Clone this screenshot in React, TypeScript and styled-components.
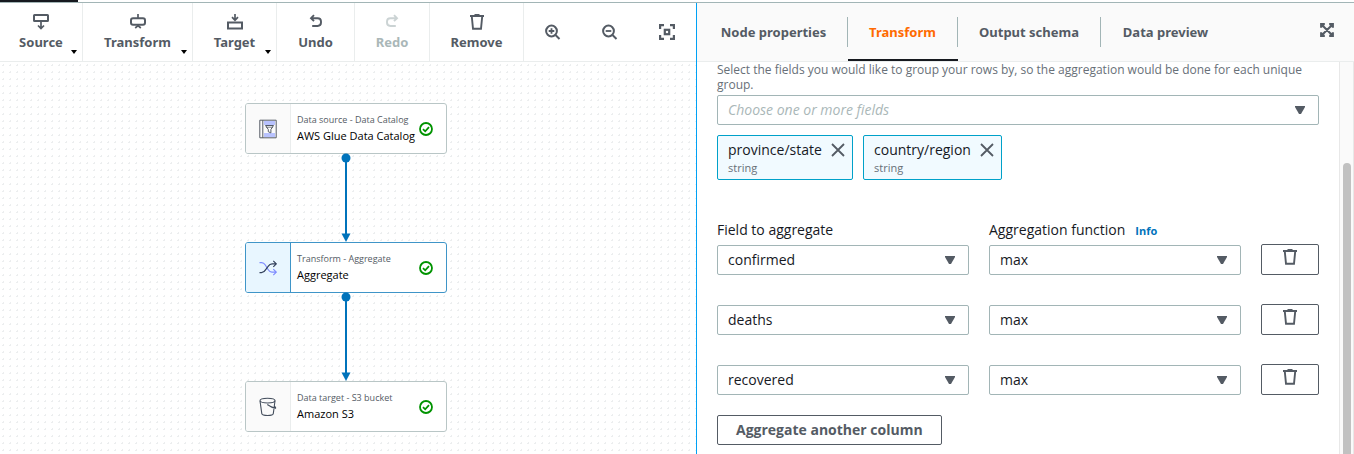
import React from 'react';
import styled, { createGlobalStyle, css } from 'styled-components';

const colors = {
  ink: '#16191f',
  slate: '#545b64',
  muted: '#687078',
  disabled: '#aab7b8',
  border: '#a2b5b6',
  line: '#eaeded',
  link: '#0073bb',
  orange: '#ff6a00',
  green: '#009300',
};

const GlobalStyle = createGlobalStyle`
  *, *::before, *::after { box-sizing: border-box; }
  body {
    margin: 0;
    background: #fff;
    color: ${colors.ink};
    font-family: 'Open Sans', 'Noto Sans', sans-serif;
    font-size: 14px;
    line-height: 20px;
  }
  button, select { font: inherit; color: inherit; margin: 0; }
  svg { display: block; }
`;

const Page = styled.div`
  display: flex;
  flex-direction: column;
  height: 100vh;
  overflow: hidden;
`;

const TopStrip = styled.header`
  flex: none;
  height: 3px;
  border-bottom: 1px solid ${colors.border};
`;

const ActivePage = styled.div`
  width: 78px;
  height: 2px;
  background: #16191f;
`;

const Workspace = styled.main`
  flex: 1;
  min-height: 0;
  display: grid;
  grid-template-columns: minmax(0, 696fr) minmax(0, 658fr);
`;

const GraphPane = styled.section`
  display: flex;
  flex-direction: column;
  min-width: 0;
  min-height: 0;
`;

const Toolbar = styled.div`
  flex: none;
  display: flex;
  height: 59px;
  border-bottom: 1px solid ${colors.line};
`;

const ToolButton = styled.button<{ $width: number }>`
  position: relative;
  flex: none;
  display: flex;
  flex-direction: column;
  align-items: center;
  width: ${(p) => p.$width}px;
  padding: 11px 0 0;
  border: 0;
  border-right: 1px solid ${colors.line};
  background: none;
  color: ${colors.slate};
  font-family: 'Noto Sans', sans-serif;
  font-size: 13px;
  font-weight: 700;
  gap: 2px;
  &:disabled { color: ${colors.disabled}; }
  &:disabled svg { opacity: 0.6; }
`;

const MenuCaret = styled.span`
  position: absolute;
  right: 5px;
  bottom: 7px;
  border: 3px solid transparent;
  border-top: 4px solid #000;
  border-bottom: 0;
`;

const IconButton = styled.button`
  flex: none;
  display: grid;
  place-items: center;
  width: 57px;
  padding: 0;
  border: 0;
  background: none;
  color: ${colors.slate};
`;

const Canvas = styled.div`
  position: relative;
  flex: 1;
  min-height: 0;
  overflow: hidden;
  background-image: radial-gradient(circle, #eceeef 1px, transparent 1px);
  background-size: 7px 7px;
`;

const Edges = styled.svg`
  position: absolute;
  top: 0;
  left: 0;
`;

const NodeCard = styled.article<{ $top: number; $selected?: boolean }>`
  position: absolute;
  left: 245px;
  top: ${(p) => p.$top}px;
  display: flex;
  align-items: center;
  width: 202px;
  height: 51px;
  border: 1px solid ${(p) => (p.$selected ? '#3f95c8' : '#b9c6c6')};
  border-radius: 3px;
  background: #fff;
  overflow: hidden;
`;

const NodeIcon = styled.div<{ $selected?: boolean }>`
  align-self: stretch;
  display: grid;
  place-items: center;
  width: 45px;
  border-right: 1px solid ${colors.line};
  background: #fafafa;
  ${(p) =>
    p.$selected &&
    css`
      border-color: #3f95c8;
      background: #e8f6ff;
    `}
`;

const NodeText = styled.div`
  flex: 1;
  padding: 0 0 2px 6px;
  line-height: 16px;
  white-space: nowrap;
`;

const NodeKind = styled.div`
  color: ${colors.slate};
  font-size: 9px;
`;

const NodeName = styled.div`
  color: #000;
  font-size: 11px;
  font-weight: 500;
`;

const NodeStatus = styled.div`
  padding-right: 13px;
`;

const DetailPane = styled.section`
  display: flex;
  flex-direction: column;
  min-width: 0;
  min-height: 0;
  border-left: 1px solid #00a1f5;
`;

const TabBar = styled.div`
  flex: none;
  display: flex;
  align-items: center;
  height: 59px;
  padding: 0 20px 0 3px;
  border-bottom: 1px solid ${colors.line};
  background: #fafafa;
`;

const TabList = styled.div`
  flex: 1;
  display: flex;
  align-self: stretch;
`;

const Tab = styled.button<{ $width: number; $active?: boolean }>`
  display: flex;
  align-items: center;
  width: ${(p) => p.$width}px;
  padding: 0;
  border: 0;
  background: none;
  color: ${(p) => (p.$active ? colors.orange : colors.slate)};
  font-family: 'Noto Sans', sans-serif;
  font-size: 13px;
  font-weight: 700;
  white-space: nowrap;
  box-shadow: ${(p) => (p.$active ? 'inset 0 -2px 0 #16191f' : 'none')};
`;

const TabLabel = styled.span`
  flex: 1;
  line-height: 30px;
  text-align: center;
  border-right: 1px solid ${colors.border};
  ${Tab}:last-child & { border-right: 0; }
`;

const ExpandButton = styled.button`
  padding: 0 0 4px;
  border: 0;
  background: none;
  color: ${colors.slate};
`;

const PaneBody = styled.div`
  flex: 1;
  min-height: 0;
  display: flex;
  overflow: hidden;
`;

const Form = styled.form`
  flex: 1;
  min-width: 0;
  padding: 0 20px;
`;

const Hint = styled.p`
  margin: 0 0 3px;
  color: ${colors.muted};
  font-size: 12px;
  line-height: 15px;
`;

const SelectBox = styled.div`
  display: grid;
  align-items: center;
  & > * { grid-area: 1 / 1; }
  & > svg { justify-self: end; margin-right: 13px; pointer-events: none; }
`;

const Select = styled.select<{ $placeholder?: boolean }>`
  appearance: none;
  width: 100%;
  height: 30px;
  padding: 0 30px 0 10px;
  border: 1px solid ${colors.border};
  border-radius: 2px;
  background: #fff;
  color: ${(p) => (p.$placeholder ? colors.disabled : colors.ink)};
  font-style: ${(p) => (p.$placeholder ? 'italic' : 'normal')};
`;

const Tags = styled.div`
  display: flex;
  gap: 10px;
  margin: 10px 0 40px;
`;

const Tag = styled.div<{ $width: number }>`
  display: flex;
  justify-content: space-between;
  align-items: flex-start;
  width: ${(p) => p.$width}px;
  height: 45px;
  padding: 4px 7px 0 10px;
  border: 1px solid #00a1c9;
  border-radius: 2px;
  background: #f1faff;
`;

const TagType = styled.div`
  color: ${colors.muted};
  font-size: 11px;
  line-height: 16px;
`;

const TagRemove = styled.button`
  margin-top: 3px;
  padding: 0;
  border: 0;
  background: none;
  color: ${colors.slate};
`;

const Row = styled.div`
  display: grid;
  grid-template-columns: minmax(0, 1fr) minmax(0, 1fr) 58px;
  gap: 20px;
  align-items: end;
  margin-bottom: 29px;
  &:last-of-type { margin-bottom: 20px; }
`;

const HeadRow = styled(Row)`
  align-items: baseline;
  height: 20px;
  margin-bottom: 4px;
`;

const InfoLink = styled.a`
  margin-left: 10px;
  color: ${colors.link};
  font-size: 11px;
  font-weight: 700;
  text-decoration: none;
`;

const OutlineButton = styled.button`
  display: inline-flex;
  justify-content: center;
  height: 30px;
  padding: 4px 18px;
  border: 1px solid ${colors.slate};
  border-radius: 2px;
  background: #fff;
  color: ${colors.slate};
  font-weight: 700;
`;

const DeleteButton = styled(OutlineButton)`
  height: 31px;
  padding: 4px 0;
`;

const ScrollTrack = styled.div`
  flex: none;
  width: 15px;
  padding: 101px 2px 0 3px;
  border: solid #e8e8e8;
  border-width: 0 1px;
  background: #fafafa;
`;

const ScrollThumb = styled.div`
  height: 100%;
  border-radius: 4px 4px 0 0;
  background: #c1c1c1;
`;

const Glyph = ({ size = 16, children }: { size?: number; children: React.ReactNode }) => (
  <svg width={size} height={size} viewBox="0 0 16 16" fill="none" stroke="currentColor" strokeWidth="2" aria-hidden="true">
    {children}
  </svg>
);

const SourceIcon = () => (
  <Glyph><rect x="1" y="1" width="14" height="6" rx="0.5" /><path d="M8 7v7M5 11.5l3 3 3-3" strokeWidth="1.7" /></Glyph>
);
const TransformIcon = () => (
  <Glyph><rect x="1" y="4.3" width="14" height="6.4" rx="2" /><path d="M8 0v4M8 11v2M5.2 14l2.8-2.4 2.8 2.4" strokeWidth="1.7" /></Glyph>
);
const TargetIcon = () => (
  <Glyph><rect x="1" y="8.5" width="14" height="6" /><path d="M8 0v6M5 3.2l3 3 3-3" strokeWidth="1.7" /></Glyph>
);
const UndoPath = () => <path d="M6 1.2L3 4.2l3 3M3 4.2h6.6q3.4 0 3.4 3.4v1q0 3.4-3.4 3.4H4.2" strokeWidth="1.9" />;
const UndoIcon = () => <Glyph><UndoPath /></Glyph>;
const RedoIcon = () => <Glyph><g transform="translate(16 0) scale(-1 1)"><UndoPath /></g></Glyph>;
const TrashIcon = () => (
  <Glyph><path d="M1 2h14M5.5 1h5" strokeWidth="1.8" /><path d="M2.8 2.5l1.2 12.3h8l1.2-12.3" strokeWidth="1.9" /></Glyph>
);
const ZoomIcon = ({ plus }: { plus?: boolean }) => (
  <Glyph><circle cx="6.5" cy="7" r="5.4" /><path d="M10.5 11l4 4" /><path d={plus ? 'M3.7 7h5.6M6.5 4.2v5.6' : 'M3.7 7h5.6'} strokeWidth="1.8" /></Glyph>
);
const FitIcon = () => (
  <Glyph><path d="M1 5V1h4M11 1h4v4M15 11v4h-4M5 15H1v-4" strokeWidth="2.4" /><rect x="5.8" y="5.8" width="4.4" height="4.4" strokeWidth="2.2" /></Glyph>
);
const ExpandIcon = () => (
  <Glyph size={14}><path d="M1.3 5.5V1.3h4.2M10.5 1.3h4.2v4.2M14.7 10.5v4.2h-4.2M5.5 14.7H1.3v-4.2M2 2l12 12M14 2L2 14" strokeWidth="2.4" /></Glyph>
);
const CloseIcon = () => (
  <svg width="14" height="14" viewBox="0 0 14 14" stroke="currentColor" strokeWidth="1.8" aria-hidden="true"><path d="M1 1l12 12M13 1L1 13" /></svg>
);
const Arrow = () => (
  <svg width="12" height="8" viewBox="0 0 12 8" fill={colors.slate} aria-hidden="true"><path d="M1 0h10v1L7 8H5L1 1z" /></svg>
);
const CheckIcon = () => (
  <svg width="14" height="14" viewBox="0 0 14 14" fill="none" stroke={colors.green} strokeWidth="1.8" role="img" aria-label="Valid">
    <circle cx="7" cy="7" r="6" /><path d="M4 7.2l2.2 2.1L10 5.2" />
  </svg>
);

const CatalogIcon = () => (
  <svg width="18" height="20" viewBox="0 0 18 20" fill="none" stroke="#545b64" aria-hidden="true">
    <path d="M5 3h11M5 5h11M5 15h11M5 17h11" stroke="#a3b0ff" strokeWidth="1.4" />
    <path d="M.8 1.2h16.4v17.6H.8zM3.8 1.2v17.6" />
    <path d="M6.5 6.5h8l-2.6 4v3.4l-2.6-1.2v-2.2z" fill="#fff" />
    <path d="M7 8.2h7" strokeWidth=".8" />
  </svg>
);
const ShuffleIcon = () => (
  <svg width="18" height="16" viewBox="0 0 18 16" fill="none" strokeWidth="1.2" aria-hidden="true">
    <path d="M.5 2.6h2.2c1.6 0 2.6.8 3.6 2.4l2.6 4.2c1.2 2 2.2 3 4 3h4M14.3 9.2l3 3-3 3" stroke="#7f8cff" />
    <path d="M.5 12.6h2c2 0 3-1 4.2-3l2.4-3.2c1.2-1.9 2.3-2.6 4-2.6h4M14.3.8l3 3-3 3" stroke="#33415c" />
  </svg>
);
const BucketIcon = () => (
  <svg width="18" height="20" viewBox="0 0 18 20" fill="none" stroke="#454f5e" strokeWidth="1.1" aria-hidden="true">
    <ellipse cx="8.5" cy="3.6" rx="7.5" ry="2.4" />
    <path d="M1 3.8l1.8 12.8c.6 2.5 11 2.5 11.5 0L16 3.8M8.3 7.5c3 2.2 5.6 3.3 8.2 3.8.6-.6-.2-1.5-1.5-2.3" />
  </svg>
);

const tools = [
  { label: 'Source', icon: <SourceIcon />, width: 83, menu: true },
  { label: 'Transform', icon: <TransformIcon />, width: 110, menu: true },
  { label: 'Target', icon: <TargetIcon />, width: 84, menu: true },
  { label: 'Undo', icon: <UndoIcon />, width: 78 },
  { label: 'Redo', icon: <RedoIcon />, width: 75, disabled: true },
  { label: 'Remove', icon: <TrashIcon />, width: 94 },
];

const nodes = [
  { kind: 'Data source - Data Catalog', name: 'AWS Glue Data Catalog', icon: <CatalogIcon />, top: 41 },
  { kind: 'Transform - Aggregate', name: 'Aggregate', icon: <ShuffleIcon />, top: 180, selected: true },
  { kind: 'Data target - S3 bucket', name: 'Amazon S3', icon: <BucketIcon />, top: 319 },
];

const tabs = [
  { label: 'Node properties', width: 148 },
  { label: 'Transform', width: 110, active: true },
  { label: 'Output schema', width: 143 },
  { label: 'Data preview', width: 129 },
];

const tags = [
  { name: 'province/state', width: 136 },
  { name: 'country/region', width: 139 },
];

const fields = ['confirmed', 'deaths', 'recovered'];

export default function App() {
  return (
    <Page>
      <GlobalStyle />
      <TopStrip><ActivePage /></TopStrip>
      <Workspace>
        <GraphPane>
          <Toolbar>
            {tools.map((t) => (
              <ToolButton key={t.label} type="button" $width={t.width} disabled={t.disabled}>
                {t.icon}
                <span>{t.label}</span>
                {t.menu && <MenuCaret />}
              </ToolButton>
            ))}
            <IconButton type="button" aria-label="Zoom in"><ZoomIcon plus /></IconButton>
            <IconButton type="button" aria-label="Zoom out"><ZoomIcon /></IconButton>
            <IconButton type="button" aria-label="Fit to screen"><FitIcon /></IconButton>
          </Toolbar>
          <Canvas>
            {nodes.map((n) => (
              <NodeCard key={n.name} $top={n.top} $selected={n.selected}>
                <NodeIcon $selected={n.selected}>{n.icon}</NodeIcon>
                <NodeText>
                  <NodeKind>{n.kind}</NodeKind>
                  <NodeName>{n.name}</NodeName>
                </NodeText>
                <NodeStatus><CheckIcon /></NodeStatus>
              </NodeCard>
            ))}
            <Edges width="460" height="390" fill="#0073bb" aria-hidden="true">
              {[96, 235].map((y) => (
                <g key={y}>
                  <circle cx="346" cy={y} r="4.5" />
                  <path d={`M345 ${y}h2v76h-2z`} />
                  <path d={`M341.5 ${y + 75.5}h9l-4.5 8.5z`} />
                </g>
              ))}
            </Edges>
          </Canvas>
        </GraphPane>
        <DetailPane>
          <TabBar>
            <TabList role="tablist">
              {tabs.map((t) => (
                <Tab key={t.label} type="button" role="tab" aria-selected={!!t.active} $width={t.width} $active={t.active}>
                  <TabLabel>{t.label}</TabLabel>
                </Tab>
              ))}
            </TabList>
            <ExpandButton type="button" aria-label="Expand panel"><ExpandIcon /></ExpandButton>
          </TabBar>
          <PaneBody>
            <Form>
              <Hint id="group-hint">
                Select the fields you would like to group your rows by, so the aggregation would be done for each unique group.
              </Hint>
              <SelectBox>
                <Select $placeholder aria-label="Fields to group by" aria-describedby="group-hint">
                  <option>Choose one or more fields</option>
                </Select>
                <Arrow />
              </SelectBox>
              <Tags>
                {tags.map((t) => (
                  <Tag key={t.name} $width={t.width}>
                    <div>
                      {t.name}
                      <TagType>string</TagType>
                    </div>
                    <TagRemove type="button" aria-label={`Remove ${t.name}`}><CloseIcon /></TagRemove>
                  </Tag>
                ))}
              </Tags>
              <HeadRow>
                <label htmlFor="field-0">Field to aggregate</label>
                <div>
                  <label htmlFor="function-0">Aggregation function</label>
                  <InfoLink href="#info">Info</InfoLink>
                </div>
              </HeadRow>
              {fields.map((f, i) => (
                <Row key={f}>
                  <SelectBox>
                    <Select id={`field-${i}`} aria-label={i ? 'Field to aggregate' : undefined}><option>{f}</option></Select>
                    <Arrow />
                  </SelectBox>
                  <SelectBox>
                    <Select id={`function-${i}`} aria-label={i ? 'Aggregation function' : undefined}><option>max</option></Select>
                    <Arrow />
                  </SelectBox>
                  <DeleteButton type="button" aria-label={`Delete ${f}`}><TrashIcon /></DeleteButton>
                </Row>
              ))}
              <OutlineButton type="button">Aggregate another column</OutlineButton>
            </Form>
            <ScrollTrack><ScrollThumb /></ScrollTrack>
          </PaneBody>
        </DetailPane>
      </Workspace>
    </Page>
  );
}
